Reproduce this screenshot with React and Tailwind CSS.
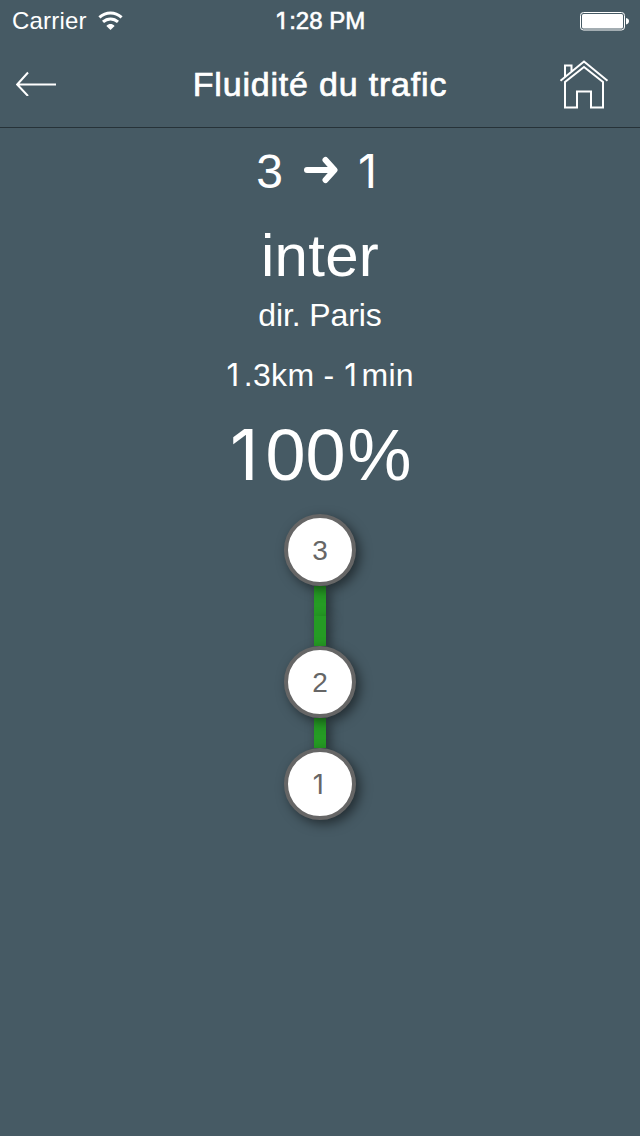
import React from "react";

// Digit one without a foot, on the same advance width as the other digits.
function One() {
  return <span className="inline-flex w-[0.57em] -translate-x-[0.06em] justify-center font-['Inter',sans-serif] text-[0.975em] font-normal leading-none">1</span>;
}

function Node({ children }) {
  return (
    <div className="relative z-10 flex size-[72px] items-center justify-center rounded-full border-4 border-[#666] bg-white pt-px text-[28px] leading-none text-[#666] shadow-[4px_4px_12px_rgba(0,0,0,0.5)]">
      {children}
    </div>
  );
}

function Segment() {
  return <div className="h-[30px] w-3 bg-[#259b24] shadow-[4px_4px_12px_rgba(0,0,0,0.5)]" />;
}

export default function App() {
  return (
    <div className="h-[1136px] w-[640px] overflow-hidden bg-[#465a64] font-['Liberation_Sans',sans-serif] text-white">
      <header className="h-32 border-b border-[#263238]">
        <div className="grid h-10 grid-cols-3 items-center pl-3 pr-[11px] text-[24px] leading-[42px]">
          <div className="flex items-center">
            <span className="w-[86px] tracking-[0.2px]">Carrier</span>
            <svg width="26" height="20" viewBox="0 0 26 20" fill="none" stroke="#fff">
              <path d="M1.4 6.3C8 0.4 17 0.4 23.6 6.3" strokeWidth="3" />
              <path d="M5 10.9C9.4 6.9 15.6 6.9 20 10.9" strokeWidth="3" />
              <path d="M8.4 14.9C10.9 12.4 14.1 12.4 16.6 14.9L12.5 19Z" fill="#fff" stroke="none" />
            </svg>
          </div>
          <div className="whitespace-nowrap text-center [-webkit-text-stroke:0.6px_#fff]"><One />:28 PM</div>
          <svg className="justify-self-end" width="49" height="20" viewBox="0 0 49 20">
            <rect x="0.5" y="1.5" width="44" height="17.5" rx="3" fill="none" stroke="#fff" />
            <rect x="2" y="3" width="41" height="14.5" rx="1.5" fill="#fff" />
            <path d="M46 7Q49 7.5 49 10T46 13.5Z" fill="#fff" />
          </svg>
        </div>
        <div className="flex h-[85px] items-center justify-between pl-4 pr-8">
          <svg width="48" height="26" viewBox="0 0 48 26" fill="none" stroke="#fff" strokeWidth="2">
            <path d="M40 14.5H1.2M12 2.5L1.2 14.5L12 26" />
          </svg>
          <h1 className="ml-4 pt-[3px] text-[34px] leading-[40px] tracking-[0.8px] [-webkit-text-stroke:0.7px_#fff]">Fluidité du trafic</h1>
          <svg className="overflow-visible" width="48" height="50" viewBox="0 0 48 50" fill="none" stroke="#fff" strokeWidth="2">
            <path d="M0.5 22.8L24 3.5L47.5 22.8M5 19V7.5H11.5V13.5" />
            <path d="M5 49.5V24L24 9L43 24V49.5H31V33.5H17V49.5Z" />
          </svg>
        </div>
      </header>

      <main className="flex flex-col items-center whitespace-nowrap">
        <div className="flex h-[87px] items-center text-[48px]">
          <span className="pt-px">3</span>
          <svg className="mx-5 mb-[3px] translate-x-px" width="34" height="28" viewBox="0 0 34 28" fill="none" stroke="#fff" strokeLinecap="round" strokeLinejoin="round">
            <path d="M3 14H29" strokeWidth="6" />
            <path d="M21.5 4L30.5 14L21.5 24" strokeWidth="6" />
          </svg>
          <One />
        </div>
        <div className="h-[80px] text-[60px] leading-[81px] tracking-[0.3px]">inter</div>
        <div className="h-[60px] text-[32px] leading-[40px] tracking-[-0.1px]">dir. Paris</div>
        <div className="h-[50px] text-[32px] leading-[40px] tracking-[0.3px]"><One />.3km - <One />min</div>
        <div className="h-[109px] text-[72px] leading-[100px]"><One /><span className="-ml-[3px] mr-[2px]">00</span>%</div>
        <Node>3</Node>
        <Segment />
        <Segment />
        <Node>2</Node>
        <Segment />
        <Node><One /></Node>
      </main>
    </div>
  );
}
